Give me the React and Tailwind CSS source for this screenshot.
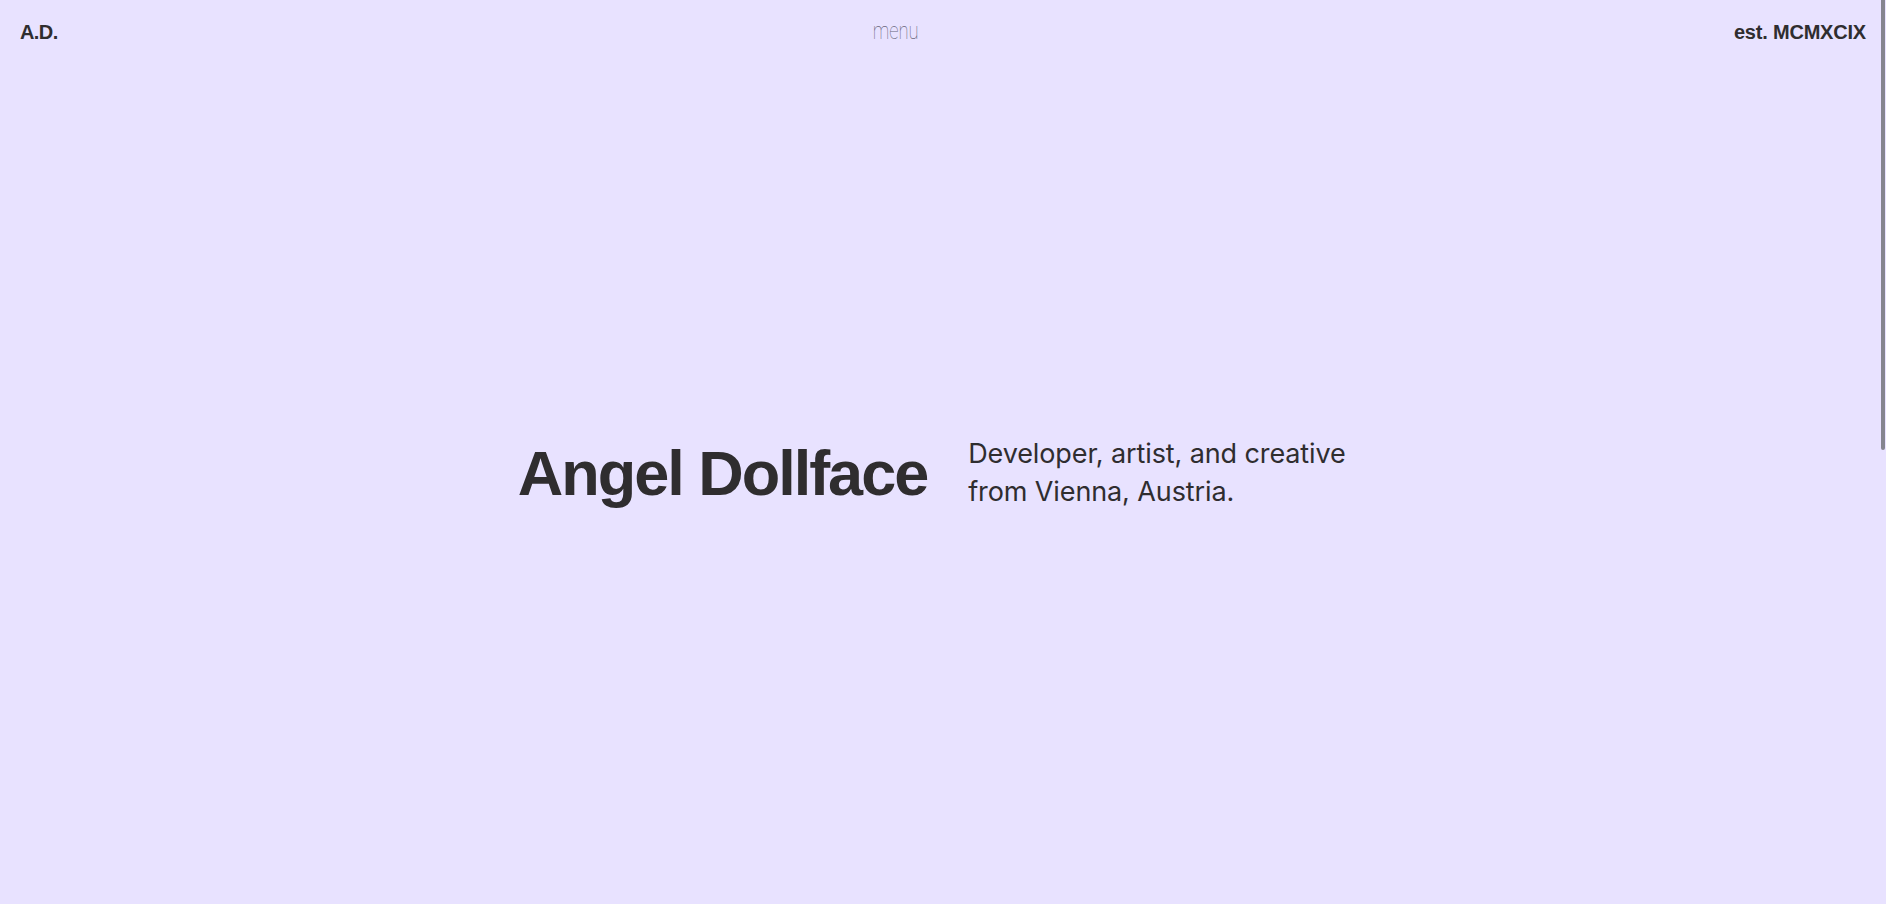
export default function App() {
  return (
    <div className="h-screen w-full bg-[#e8e2ff] text-[#2f2d2f] flex flex-col overflow-hidden relative" style={{ fontFamily: '"Liberation Sans", Arial, sans-serif' }}>
      <header className="flex items-baseline justify-between px-5 pt-[18px] h-[38px]">
        <a className="text-[20px] leading-[28px] font-bold tracking-[-0.03em]">A.D.</a>
        <button className="text-[23px] leading-[28px] font-thin text-[#66647a] scale-x-[0.8]" style={{ fontFamily: 'Roboto, sans-serif' }}>menu</button>
        <span className="text-[20px] leading-[28px] font-bold tracking-[-0.01em]">est. MCMXCIX</span>
      </header>
      <main className="flex-1 flex items-center justify-center pt-[4px]">
        <div className="flex items-center gap-[41px]">
          <h1 className="text-[63px] leading-[63px] font-bold tracking-[-0.032em]">Angel Dollface</h1>
          <p className="w-[400px] text-[27px] leading-[38px] tracking-[-0.004em]" style={{ fontFamily: 'Inter, "Liberation Sans", sans-serif' }}>Developer, artist, and creative from Vienna, Austria.</p>
        </div>
      </main>
      <div className="absolute right-[1px] top-0 w-[4px] h-[450px] bg-[#85858f] rounded-b-sm" />
    </div>
  );
}
